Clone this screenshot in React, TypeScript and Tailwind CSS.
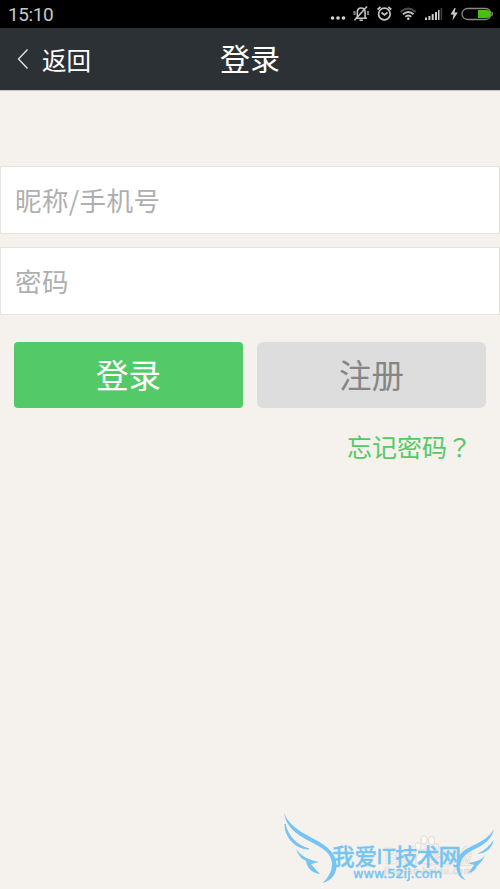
const cjk = "font-['Noto_Sans_CJK_SC',sans-serif]";

function StatusIcons() {
  return (
    <svg width="170" height="28" viewBox="330 0 170 28" fill="none" stroke="#c4c4c4" aria-hidden="true">
      <g fill="#d4d4d4" stroke="none">
        <circle cx="332.5" cy="18" r="1.8" />
        <circle cx="338" cy="18" r="1.8" />
        <circle cx="343.5" cy="18" r="1.8" />
      </g>
      <g strokeWidth="1.6">
        <path d="M355.500 18.200h11.500M357.300 18v-5.500c0-3 1.500-4.500 3.800-4.500s4 1.500 4 4.500V18M359.500 20.300h3.400" />
        <path d="M354.500 20.200L367 6.500" />
        <path d="M354.500 11v4M368 11v4" strokeWidth="2.200" opacity=".65" />
      </g>
      <g strokeWidth="1.700">
        <circle cx="384.400" cy="14" r="5.800" />
        <path d="M381.500 12.500l3 2.500 3-2.500M377.500 9.500l3-2.500M391.300 9.500l-3-2.500" />
      </g>
      <g strokeWidth="1.900">
        <path d="M400.800 12q7.500-6.800 15 0" opacity=".4" />
        <path d="M403 14.300q5.300-4.800 10.600 0" />
        <path d="M405.300 16.800q3-2.600 6 0" />
        <circle cx="408.300" cy="18.800" r="1.200" fill="#ddd" stroke="none" />
      </g>
      <g fill="#ccc" stroke="none">
        <path d="M425 17.500h2V20h-2zM428.400 16h2v4h-2zM431.700 14h2v6h-2zM435 12h2v8h-2zM438 10h1.500v10H438z" />
        <path d="M440.600 8h1.600v12h-1.600z" opacity=".3" />
        <path d="M454.500 8l-4 6.500h3l-1 6 5.300-8h-3.200l1-4.500z" />
      </g>
      <rect x="462" y="8.500" width="29" height="11" rx="5.500" stroke="#888" strokeWidth="1.300" />
      <path d="M491.800 12q1.300 2 0 4" stroke="#888" strokeWidth="1.300" />
      <path d="M478 10h8.500a4 4 0 010 8H478z" fill="#48c10b" stroke="none" />
    </svg>
  );
}

function Watermark() {
  return (
    <svg
      className="pointer-events-none absolute bottom-0 right-0"
      width="225"
      height="84"
      viewBox="275 805 225 84"
      aria-hidden="true"
    >
      <g fill="#faf8f5" stroke="#dedad6" strokeWidth="1">
        <ellipse cx="418" cy="846.500" rx="3" ry="4" />
        <ellipse cx="424" cy="840" rx="3" ry="4.200" />
        <ellipse cx="431.500" cy="840.500" rx="3" ry="4.200" />
        <ellipse cx="436" cy="847" rx="2.500" ry="3.500" />
        <path d="M416 858c2-5 6-9 10-9s7 4 9 9-3 7-9 6-11 0-10-6z" />
      </g>
      <g className="font-['Noto_Sans_CJK_SC',sans-serif]" fill="#f8f6f3" stroke="#dfdbd7" strokeWidth=".7">
        <text x="384" y="864" fontSize="21" fontWeight="700">Bai</text>
        <text x="430" y="864" fontSize="21" fontWeight="500">经验</text>
        <text x="384" y="874" fontSize="9" textLength="88">jingyan.baidu.com</text>
      </g>
      <g fill="#75c5f4">
        <path d="M284 813C288 824 299 831 312 838C330 847 336 855 336.500 864C337 874 331 881 322.500 883C328 878 332 872 332 863C331 853 323 848 311 842C295 834 286 826 284 813Z" />
        <path d="M285 824C288 836 296 845 309 849C296 849 285 838 285 824Z" stroke="#75c5f4" strokeWidth="1" />
        <path d="M296 849C302 857 309 860 319 862L311 864Q316 870 320 874C312 873 307 868 306 861Q299 858 296 849Z" />
        <path d="M494 829C492 839 484 845 473 850C462 855 459 863 460 870Q461 877 466 880C459 879 456 872 456.500 864C457 854 464 850 474 845C483 841 490 836 494 829Z" />
        <path d="M493.500 840C492 849 486 853 477 854Q488 849 493.500 840Z" />
        <path d="M485 855C482 860 476 862 468 863L474 865Q471 870 468 873Q475 872 477 866Q483 861 485 855Z" />
      </g>
      <g fill="#75c5f4" stroke="#75c5f4">
        <g className="font-['Noto_Sans_CJK_SC',sans-serif]" fontSize="22.500" fontWeight="500" strokeWidth=".3">
          <text x="332" y="864.500">我爱</text>
          <text x="395" y="864.500" textLength="66">技术网</text>
        </g>
        <text
          className="font-['Liberation_Sans',sans-serif]"
          x="376.500"
          y="864"
          fontSize="22"
          strokeWidth=".5"
          textLength="19"
          lengthAdjust="spacingAndGlyphs"
        >
          IT
        </text>
        <text
          className="font-['DejaVu_Sans',sans-serif]"
          x="353"
          y="878"
          fontSize="12"
          strokeWidth=".4"
          textLength="89"
          lengthAdjust="spacingAndGlyphs"
        >
          www.52ij.com
        </text>
      </g>
    </svg>
  );
}

export default function App() {
  return (
    <div className={`relative flex h-[889px] w-[500px] flex-col overflow-hidden bg-[#f5f1ec] ${cjk}`}>
      <div className="flex h-7 shrink-0 items-center justify-between bg-black pl-2">
        <span className="pt-0.5 font-[Roboto,sans-serif] text-[19px] leading-7 tracking-[-0.4px] text-[#c8c8c8]">15:10</span>
        <StatusIcons />
      </div>
      <header className="grid h-[63px] shrink-0 grid-cols-3 items-center border-b border-[#c9c6c4] bg-[#2c3135] text-white">
        <button className="flex items-center pl-[17px] text-[24.500px] leading-8">
          <svg className="mr-3.5 shrink-0" width="11" height="20" viewBox="0 0 11 20" fill="none" stroke="#e8e8e8" strokeWidth="1.300" aria-hidden="true">
            <path d="M10.500 .5L1.500 10l9 9.500" />
          </svg>
          <span className="pt-0.5">返回</span>
        </button>
        <h1 className="pb-1 text-center text-[30px] leading-9">登录</h1>
      </header>
      <form className="flex flex-col pt-[75px]">
        <input
          aria-label="昵称/手机号"
          placeholder="昵称/手机号"
          className="h-[68px] w-full border border-[#e6e3df] bg-white px-3.5 pb-0.5 text-[26.500px] tracking-[0.4px] outline-none placeholder:text-[#afafaf]"
        />
        <input
          type="text"
          aria-label="密码"
          placeholder="密码"
          className="mt-[13px] h-[68px] w-full border border-[#e6e3df] bg-white px-3.5 pb-0.5 text-[26.500px] tracking-[0.4px] outline-none placeholder:text-[#afafaf]"
        />
        <div className="mt-[27px] grid grid-cols-2 gap-3.5 px-3.5 text-[32.500px]">
          <button type="button" className="h-[66px] rounded bg-[#53ca67] pb-0.5 text-white">登录</button>
          <button type="button" className="h-[66px] rounded-md bg-[#dddddd] pb-0.5 text-[#858585]">注册</button>
        </div>
        <a className="mr-[28px] mt-[19px] self-end text-[25px] leading-[38px] text-[#53ca67]">
          忘记密码<span lang="zh-TW" className="font-['Noto_Sans_CJK_TC',sans-serif]">？</span>
        </a>
      </form>
      <Watermark />
    </div>
  );
}
